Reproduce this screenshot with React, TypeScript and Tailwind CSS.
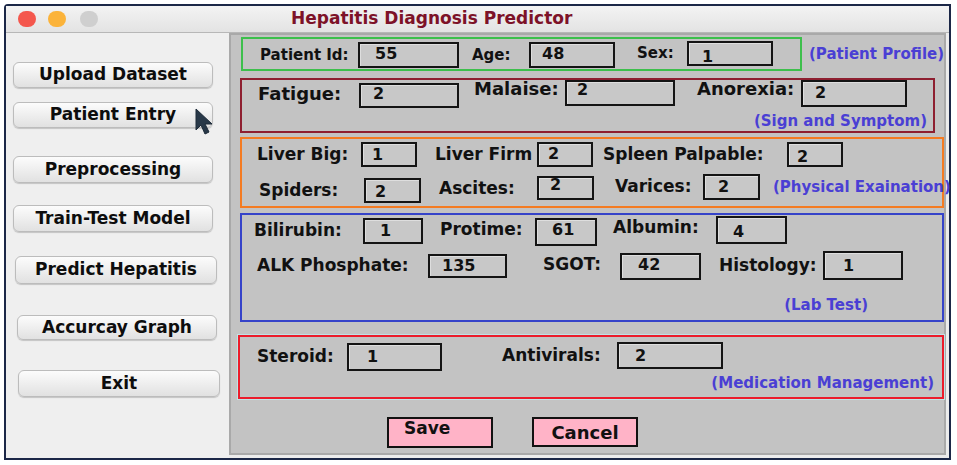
import React from 'react';

type FieldProps = {
  label: string;
  value: string;
  wrap: string;
  labelCls: string;
  boxCls: string;
  valueCls: string;
};

const Field: React.FC<FieldProps> = ({ label, value, wrap, labelCls, boxCls, valueCls }) => (
  <div className={`flex shrink-0 items-center ${wrap}`}>
    <span className={`shrink-0 whitespace-nowrap font-bold text-[#111] ${labelCls}`}>{label}</span>
    <div
      className={`flex shrink-0 items-center border-2 border-[#141414] bg-[#c8c8c8] shadow-[inset_1px_1px_0_#dedede] ${boxCls}`}
    >
      <span className={`text-[16px] font-bold leading-[18px] text-[#111] ${valueCls}`}>{value}</span>
    </div>
  </div>
);

const SideButton: React.FC<{ label: string; className: string }> = ({ label, className }) => (
  <button
    className={`flex shrink-0 items-center justify-center rounded-[6px] border border-[#bcbcbc] bg-gradient-to-b from-[#fcfcfc] to-[#e1e1e1] text-[17px] font-bold text-[#0d0d0d] shadow-[0_1px_1px_rgba(0,0,0,0.18)] ${className}`}
  >
    {label}
  </button>
);

const Tag: React.FC<{ text: string; className: string }> = ({ text, className }) => (
  <span className={`whitespace-nowrap text-[15px] font-bold leading-[18px] text-[#4a3fd4] ${className}`}>{text}</span>
);

const Cursor = () => (
  <svg className="absolute left-[189px] top-[75px]" width="20" height="28" viewBox="0 0 20 28">
    <path d="M1 1 L1 22 L6 17 L10 26 L14 24 L10 16 L17 16 Z" fill="#283848" stroke="#1c2a38" strokeWidth="1" />
  </svg>
);

export default function App() {
  return (
    <div className="h-[465px] w-[957px] overflow-hidden bg-white pl-[4px] pt-[4px] font-['DejaVu_Sans',sans-serif]">
      <div className="flex h-[456px] w-[947px] flex-col rounded-tl-[4px] border-2 border-[#1b2747] bg-[#ececec]">
        {/* title bar */}
        <div className="flex h-[27px] shrink-0 items-center border-b border-[#b7b7b7] bg-gradient-to-b from-[#f3f3f3] to-[#e3e3e3]">
          <span className="ml-[12px] h-[16px] w-[18px] rounded-full bg-[#f4574d]" />
          <span className="ml-[12px] h-[16px] w-[18px] rounded-full bg-[#fbb33a]" />
          <span className="ml-[14px] h-[16px] w-[18px] rounded-full bg-[#cfcfcf]" />
          <span className="ml-[193px] text-[17px] font-bold text-[#7d1228]">Hepatitis Diagnosis Predictor</span>
        </div>

        <div className="flex flex-1">
          {/* left menu */}
          <div className="relative flex w-[223px] shrink-0 flex-col items-start bg-[#efefef]">
            <SideButton label="Upload Dataset" className="ml-[7px] mt-[29px] h-[26px] w-[200px]" />
            <SideButton label="Patient Entry" className="ml-[7px] mt-[14px] h-[26px] w-[200px]" />
            <SideButton label="Preprocessing" className="ml-[7px] mt-[28px] h-[27px] w-[200px]" />
            <SideButton label="Train-Test Model" className="ml-[7px] mt-[22px] h-[27px] w-[200px]" />
            <SideButton label="Predict Hepatitis" className="ml-[9px] mt-[24px] h-[28px] w-[202px]" />
            <SideButton label="Accurcay Graph" className="ml-[11px] mt-[31px] h-[25px] w-[200px]" />
            <SideButton label="Exit" className="ml-[12px] mt-[30px] h-[27px] w-[202px]" />
            <Cursor />
          </div>

          {/* form panel */}
          <div className="flex h-[422px] w-[717px] shrink-0 flex-col border-2 border-[#a9a9a9] bg-[#c3c3c3]">
            {/* Patient Profile */}
            <div className="ml-[10px] mt-[2px] flex items-center">
              <div className="flex h-[34px] w-[561px] shrink-0 items-start border-2 border-[#3dbf4c]">
                <Field
                  label="Patient Id:"
                  value="55"
                  wrap="ml-[17px] mt-[3px]"
                  labelCls="w-[98px] text-[15px]"
                  boxCls="h-[26px] w-[101px]"
                  valueCls="pl-[15px] pb-[3px]"
                />
                <Field
                  label="Age:"
                  value="48"
                  wrap="ml-[13px] mt-[3px]"
                  labelCls="w-[57px] text-[15px]"
                  boxCls="h-[26px] w-[86px]"
                  valueCls="pl-[11px] pb-[3px]"
                />
                <Field
                  label="Sex:"
                  value="1"
                  wrap="ml-[22px] mt-[2px]"
                  labelCls="w-[50px] text-[15px]"
                  boxCls="h-[25px] w-[86px]"
                  valueCls="pl-[13px] pt-[6px]"
                />
              </div>
              <Tag text="(Patient Profile)" className="ml-[7px]" />
            </div>

            {/* Sign and Symptom */}
            <div className="ml-[9px] mt-[7px] flex h-[55px] w-[695px] flex-col border-2 border-[#8e1f30]">
              <div className="flex items-start">
                <Field
                  label="Fatigue:"
                  value="2"
                  wrap="ml-[16px] mt-[3px]"
                  labelCls="w-[101px] text-[18px] -mt-[4px]"
                  boxCls="h-[25px] w-[100px]"
                  valueCls="pl-[12px] pb-[3px]"
                />
                <Field
                  label="Malaise:"
                  value="2"
                  wrap="ml-[15px]"
                  labelCls="w-[91px] text-[18px] -mt-[10px]"
                  boxCls="h-[26px] w-[110px]"
                  valueCls="pl-[10px] pb-[6px]"
                />
                <Field
                  label="Anorexia:"
                  value="2"
                  wrap="ml-[22px]"
                  labelCls="w-[104px] text-[18px] -mt-[10px]"
                  boxCls="h-[27px] w-[106px]"
                  valueCls="pl-[12px] pb-[2px]"
                />
              </div>
              <Tag text="(Sign and Symptom)" className="mb-[1px] mr-[6px] mt-auto self-end" />
            </div>

            {/* Physical Examination */}
            <div className="ml-[9px] mt-[4px] flex h-[71px] w-[704px] flex-col border-2 border-[#f47b22]">
              <div className="mt-[3px] flex items-start">
                <Field
                  label="Liver Big:"
                  value="1"
                  wrap="ml-[15px]"
                  labelCls="w-[104px] text-[17px]"
                  boxCls="h-[25px] w-[56px]"
                  valueCls="pl-[9px]"
                />
                <Field
                  label="Liver Firm"
                  value="2"
                  wrap="ml-[18px]"
                  labelCls="w-[102px] text-[17px]"
                  boxCls="h-[25px] w-[56px]"
                  valueCls="pl-[9px] pb-[2px]"
                />
                <Field
                  label="Spleen Palpable:"
                  value="2"
                  wrap="ml-[10px]"
                  labelCls="w-[184px] text-[17px]"
                  boxCls="h-[25px] w-[56px]"
                  valueCls="pl-[8px] pt-[4px]"
                />
              </div>
              <div className="mt-[6px] flex items-start">
                <Field
                  label="Spiders:"
                  value="2"
                  wrap="ml-[17px] mt-[4px]"
                  labelCls="w-[105px] text-[17px]"
                  boxCls="h-[25px] w-[57px]"
                  valueCls="pl-[9px] pt-[4px]"
                />
                <Field
                  label="Ascites:"
                  value="2"
                  wrap="ml-[18px] mt-[2px]"
                  labelCls="w-[98px] text-[17px]"
                  boxCls="h-[24px] w-[57px]"
                  valueCls="pl-[11px] pb-[7px]"
                />
                <Field
                  label="Varices:"
                  value="2"
                  wrap="ml-[21px]"
                  labelCls="w-[88px] text-[17px]"
                  boxCls="h-[26px] w-[57px]"
                  valueCls="pl-[13px]"
                />
                <Tag text="(Physical Exaination)" className="ml-[13px] mt-[4px]" />
              </div>
            </div>

            {/* Lab Test */}
            <div className="ml-[9px] mt-[5px] flex h-[109px] w-[704px] flex-col border-2 border-[#3543c9]">
              <div className="mt-[1px] flex items-start">
                <Field
                  label="Bilirubin:"
                  value="1"
                  wrap="ml-[12px] mt-[2px]"
                  labelCls="w-[109px] text-[17px]"
                  boxCls="h-[26px] w-[60px]"
                  valueCls="pl-[15px]"
                />
                <Field
                  label="Protime:"
                  value="61"
                  wrap="ml-[17px] mt-[2px]"
                  labelCls="w-[95px] text-[17px] -mt-[4px]"
                  boxCls="h-[28px] w-[62px]"
                  valueCls="pl-[15px] pb-[4px]"
                />
                <Field
                  label="Albumin:"
                  value="4"
                  wrap="ml-[16px]"
                  labelCls="w-[103px] text-[17px] -mt-[5px]"
                  boxCls="h-[28px] w-[71px]"
                  valueCls="pl-[15px] pt-[3px]"
                />
              </div>
              <div className="mt-[5px] flex items-start">
                <Field
                  label="ALK Phosphate:"
                  value="135"
                  wrap="ml-[15px] mt-[2px]"
                  labelCls="w-[171px] text-[17px]"
                  boxCls="h-[24px] w-[79px]"
                  valueCls="pl-[12px]"
                />
                <Field
                  label="SGOT:"
                  value="42"
                  wrap="ml-[36px] mt-[2px]"
                  labelCls="w-[77px] text-[17px] -mt-[3px]"
                  boxCls="h-[27px] w-[81px]"
                  valueCls="pl-[16px] pb-[3px]"
                />
                <Field
                  label="Histology:"
                  value="1"
                  wrap="ml-[18px]"
                  labelCls="w-[104px] text-[17px]"
                  boxCls="h-[29px] w-[80px]"
                  valueCls="pl-[18px]"
                />
              </div>
              <Tag text="(Lab Test)" className="mr-[74px] mt-[16px] self-end" />
            </div>

            {/* Medication Management */}
            <div className="ml-[7px] mt-[13px] flex h-[64px] w-[706px] flex-col border-2 border-[#ec1c2b] shadow-[0_0_0_1px_#bfe3e6]">
              <div className="flex items-start">
                <Field
                  label="Steroid:"
                  value="1"
                  wrap="ml-[17px] mt-[6px]"
                  labelCls="w-[90px] text-[17px]"
                  boxCls="h-[28px] w-[95px]"
                  valueCls="pl-[18px]"
                />
                <Field
                  label="Antivirals:"
                  value="2"
                  wrap="ml-[60px] mt-[5px]"
                  labelCls="w-[115px] text-[17px]"
                  boxCls="h-[27px] w-[106px]"
                  valueCls="pl-[16px]"
                />
              </div>
              <Tag text="(Medication Management)" className="mr-[8px] mt-[3px] self-end" />
            </div>

            {/* actions */}
            <div className="mt-[18px] flex items-start">
              <button className="ml-[156px] flex h-[31px] w-[106px] items-center border-2 border-[#111] bg-[#ffb3c7] pb-[7px] pl-[15px] text-[17px] font-bold text-[#111]">
                Save
              </button>
              <button className="ml-[39px] flex h-[30px] w-[106px] items-center justify-center border-2 border-[#111] bg-[#ffb3c7] text-[18px] font-bold text-[#111]">
                Cancel
              </button>
            </div>
          </div>
        </div>
      </div>
    </div>
  );
}
